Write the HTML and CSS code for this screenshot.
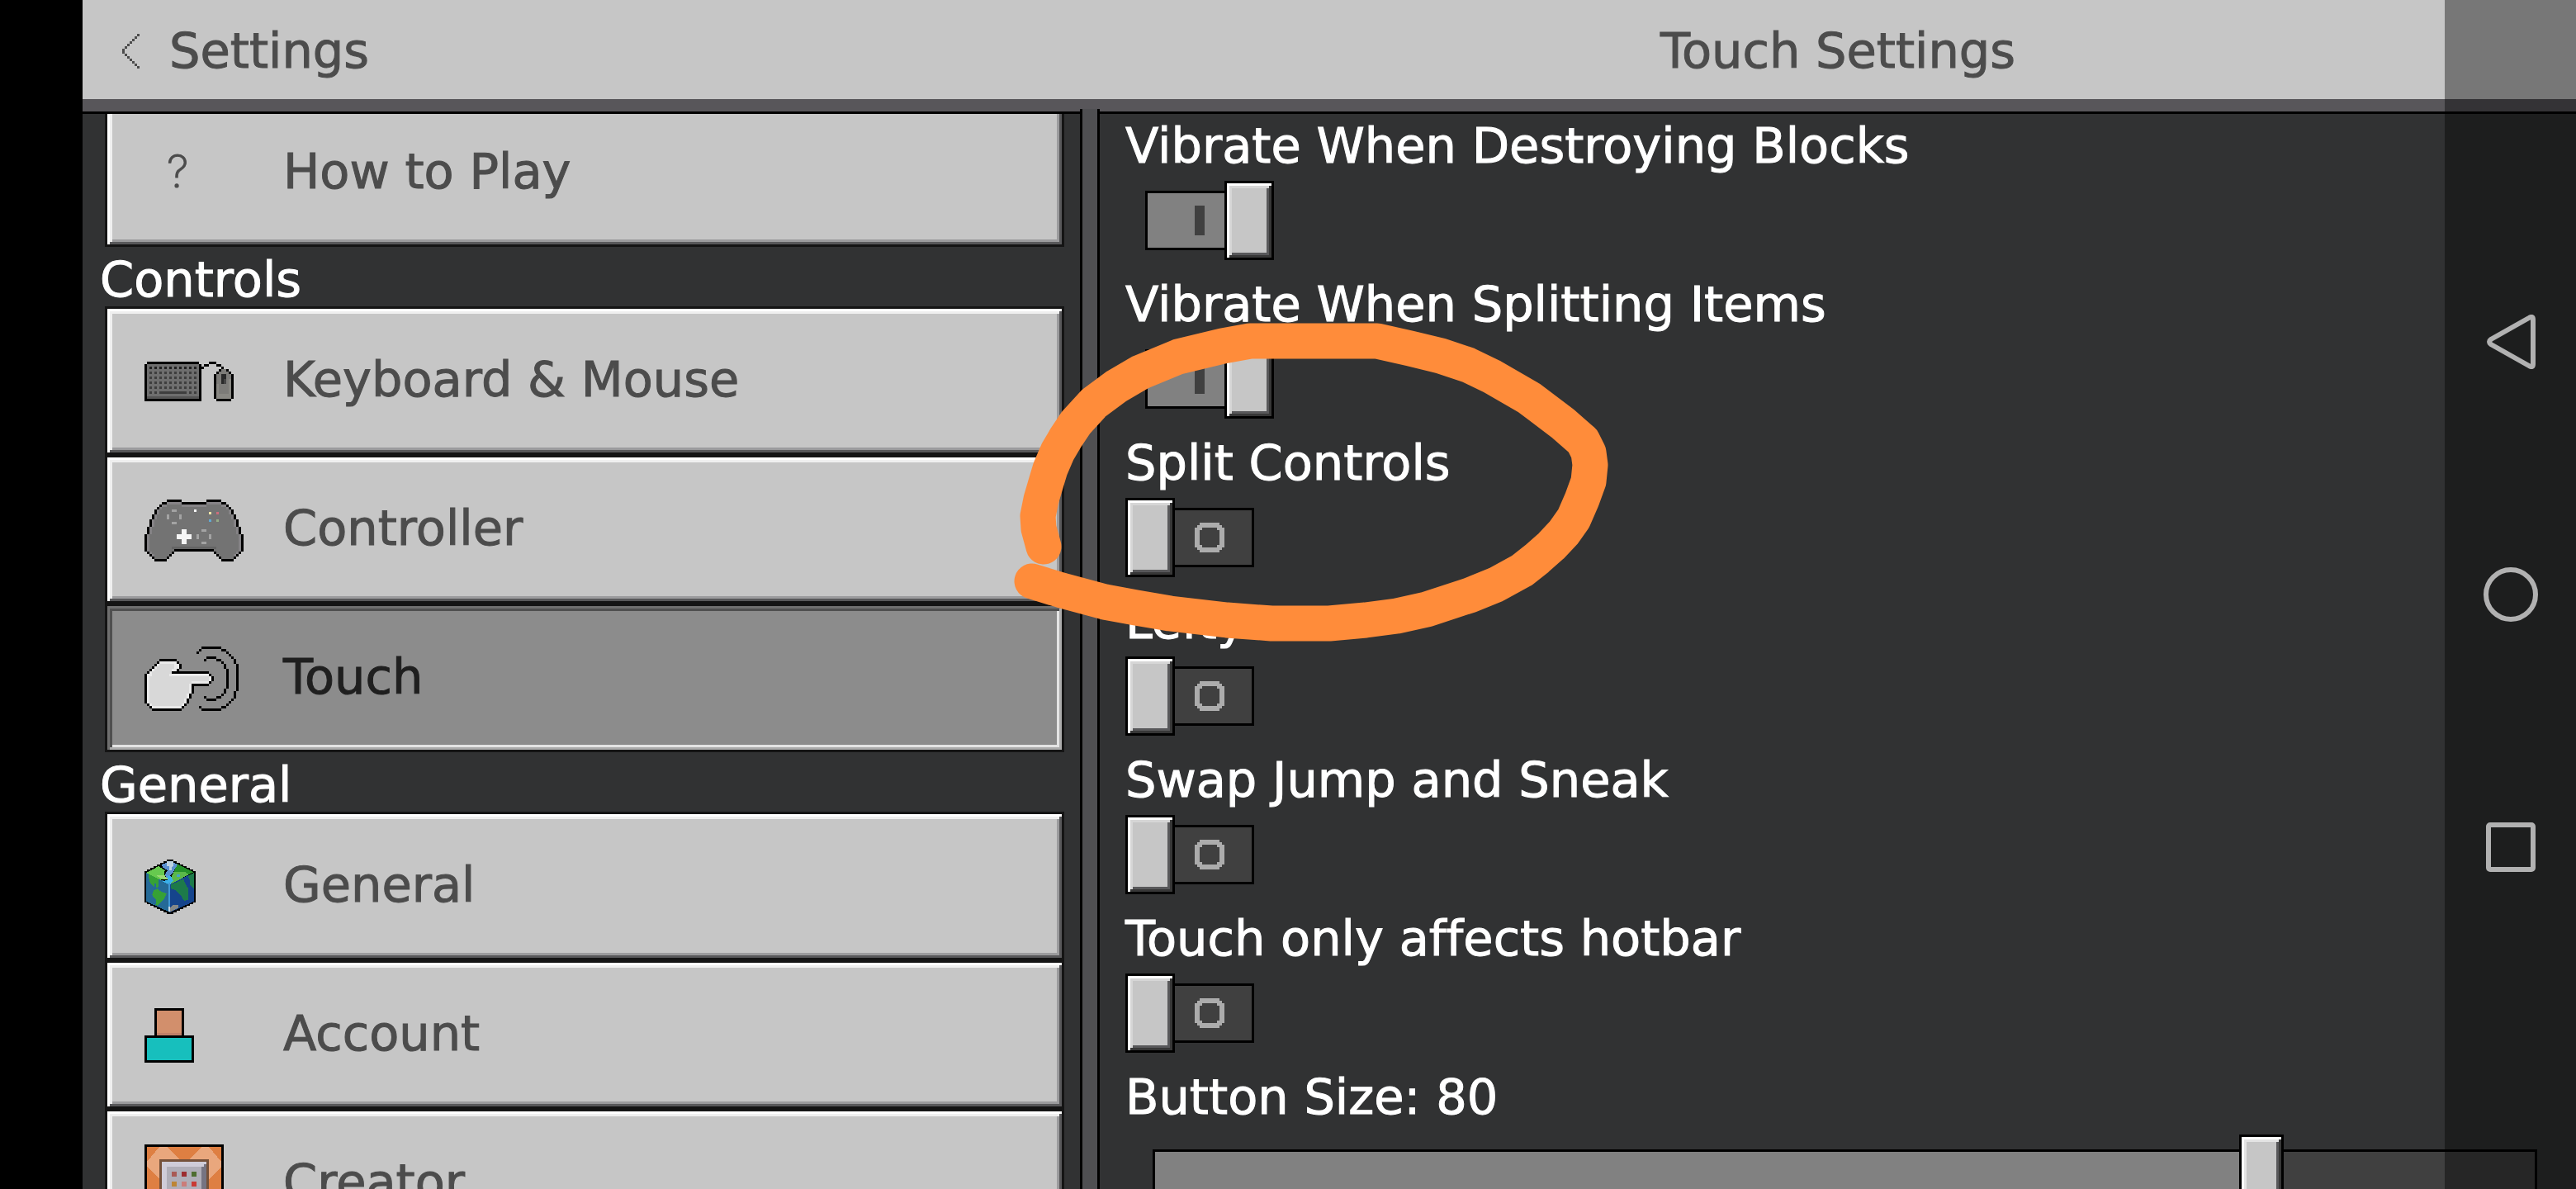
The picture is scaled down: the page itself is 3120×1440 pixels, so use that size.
FILE: index.html
```html
<!DOCTYPE html>
<html lang="en">
<head>
<meta charset="utf-8">
<title>Touch Settings</title>
<link rel="stylesheet" href="styles.css">
</head>
<body>
<div class="game">
  <header class="topbar">
    <button class="back" type="button">
      <svg class="chevron" viewBox="0 0 7 14" aria-hidden="true"><path d="M6 0h1v1h-1zM5 1h1v1h-1zM4 2h1v1h-1zM3 3h1v1h-1zM2 4h1v1h-1zM1 5h1v1h-1zM0 6h1v2h-1zM1 8h1v1h-1zM2 9h1v1h-1zM3 10h1v1h-1zM4 11h1v1h-1zM5 12h1v1h-1zM6 13h1v1h-1z"/></svg>
      <span>Settings</span>
    </button>
    <h1 class="title">Touch Settings</h1>
  </header>

  <div class="columns">
    <nav class="sidebar" aria-label="Settings sections">
      <div class="sections">
        <button class="item" type="button">
          <span class="icon icon-help" aria-hidden="true">?</span>
          <span>How to Play</span>
        </button>

        <h2 class="group">Controls</h2>
        <button class="item" type="button">
          <span class="icon"><svg width="108" height="48" viewBox="0 0 36 16" aria-hidden="true">
            <path fill="#000" d="M1 0H22V1H23V16H0V1H1zM23 2h1v1h-1zM24 1h2v1h-2zM26 0h3v1h-3zM29 1h2v1h-2zM31 2h1v1h-1zM30 3h4v1h-4zM29 4h6v1h-6zM28 5h8v10h-8zM29 15h6v1h-6z"/>
            <path fill="#6e6e6e" d="M1 1H22V14H1z"/>
            <path fill="#555" d="M1 14H22V15H1z"/>
            <path fill="#202020" d="M2 2h1v1h-1zM4 2h1v1h-1zM6 2h1v1h-1zM8 2h1v1h-1zM10 2h1v1h-1zM12 2h1v1h-1zM14 2h1v1h-1zM16 2h1v1h-1zM18 2h1v1h-1zM20 2h1v1h-1z"/>
            <path fill="#3e3e3e" d="M2 4h1v1h-1zM4 4h1v1h-1zM6 4h1v1h-1zM8 4h1v1h-1zM10 4h1v1h-1zM12 4h1v1h-1zM14 4h1v1h-1zM16 4h1v1h-1zM18 4h1v1h-1zM20 4h1v1h-1zM2 6h1v1h-1zM4 6h1v1h-1zM6 6h1v1h-1zM8 6h1v1h-1zM10 6h1v1h-1zM12 6h1v1h-1zM14 6h1v1h-1zM16 6h1v1h-1zM18 6h1v1h-1zM20 6h1v1h-1zM2 8h1v1h-1zM4 8h1v1h-1zM6 8h1v1h-1zM8 8h1v1h-1zM10 8h1v1h-1zM12 8h1v1h-1zM14 8h1v1h-1zM16 8h1v1h-1zM18 8h1v1h-1zM20 8h1v1h-1zM2 10h1v1h-1zM4 10h1v1h-1zM6 10h1v1h-1zM8 10h1v1h-1zM10 10h1v1h-1zM12 10h1v1h-1zM14 10h1v1h-1zM16 10h1v1h-1zM18 10h1v1h-1zM20 10h1v1h-1zM2 12h1v1h-1zM4 12h1v1h-1zM6 12h11v1h-11zM18 12h1v1h-1zM20 12h1v1h-1z"/>
            <path fill="#7c7b78" d="M31 3h2v1h1v1h1v10h-6v-10h1v-1h1z"/>
            <path fill="#898883" d="M29 9h1v6h-1zM34 7h1v8h-1zM30 13h4v2h-4z"/>
            <path fill="#292929" d="M31 5h2v4h-2z"/>
            <path fill="#444" d="M32 7h1v2h-1z"/>
          </svg></span>
          <span>Keyboard &amp; Mouse</span>
        </button>
        <button class="item" type="button">
          <span class="icon"><svg width="120" height="75" viewBox="0 0 40 25" aria-hidden="true">
            <path fill="#000" d="M9 0H15V1H25V0H31V1H33V2H34V3H35V4H36V6H37V8H38V11H39V14H40V21H39V22H38V23H37V24H36V25H31V24H30V23H29V22H28V21H12V22H11V23H10V24H9V25H4V24H3V23H2V22H1V21H0V14H1V11H2V8H3V6H4V4H5V3H6V2H7V1H9Z"/>
            <path fill="#858386" d="M9 1H15V2H25V1H31V2H33V3H34V4H35V6H36V8H37V11H38V14H39V21H38V22H37V23H36V24H31V23H30V22H29V21H28V20H12V21H11V22H10V23H9V24H4V23H3V22H2V21H1V14H2V11H3V8H4V6H5V4H6V3H7V2H9Z"/>
            <path fill="#737373" d="M9 2H15V3H25V2H31V3H33V4H34V6H35V8H36V11H37V14H38V21H37V22H36V24H31V23H30V22H29V21H28V20H12V21H11V22H10V23H9V24H4V22H3V21H2V14H3V11H4V8H5V6H6V4H7V3H9Z"/>
            <path fill="#646464" d="M11 19H29V20H11z"/>
            <path fill="#a3a3a3" d="M11 4h2v1h-2zM9 6h1v2h-1zM14 6h1v2h-1zM11 9h2v1h-2zM23 12h2v1h-2zM21 14h1v2h-1zM26 14h1v2h-1zM23 17h2v1h-2z"/>
            <path fill="#f5f5f5" d="M20 4h1v1h-1zM15 12h2v2h2v2h-2v2h-2v-2h-2v-2h2z"/>
            <path fill="#efe6a8" d="M26 5h1v1h-1z"/>
            <path fill="#cc6c7c" d="M29 5h1v1h-1z"/>
            <path fill="#62a9d2" d="M26 8h1v1h-1z"/>
            <path fill="#97ad88" d="M29 8h1v1h-1z"/>
          </svg></span>
          <span>Controller</span>
        </button>
        <button class="item item-selected" type="button" aria-current="page">
          <span class="icon"><svg width="114" height="78" viewBox="0 0 38 26" aria-hidden="true">
            <path fill="#000" d="M6 5H13V6H14V7H15V9H14V10H26V11H27V12H28V14H27V15H26V16H20V19H19V21H18V23H17V24H16V25H15V26H3V25H2V24H1V23H0V11H1V10H2V9H3V8H4V7H5V6H6Z"/>
            <path fill="#eaeaea" d="M6 6H13V7H14V9H13V10H11V11H26V12H27V14H26V15H19V19H18V21H17V23H16V24H15V25H3V24H2V23H1V11H2V10H3V9H4V8H5V7H6Z"/>
            <path fill="#d8d8d8" d="M6 7H12V9H11V11H10V12H26V14H19V15H18V19H17V21H16V23H15V24H3V23H2V12H3V10H4V9H5V8H6Z"/>
            <path fill="#000" d="M21 2h1v1h-1zM22 1h1v1h-1zM23 0h8v1h-8zM31 1h2v1h-2zM33 2h1v1h-1zM34 3h1v1h-1zM35 4h1v1h-1zM36 5h1v2h-1zM37 7h1v11h-1zM36 18h1v3h-1zM35 21h1v1h-1zM34 22h1v1h-1zM33 23h1v1h-1zM31 24h2v1h-2zM23 25h8v1h-8zM22 24h1v1h-1zM24 5h1v1h-1zM25 4h4v1h-4zM29 5h2v1h-2zM31 6h1v1h-1zM32 7h1v2h-1zM33 9h1v8h-1zM32 17h1v2h-1zM31 19h1v1h-1zM29 20h2v1h-2zM25 21h4v1h-4zM24 20h1v1h-1z"/>
          </svg></span>
          <span>Touch</span>
        </button>

        <h2 class="group">General</h2>
        <button class="item" type="button">
          <span class="icon"><svg width="62" height="66" viewBox="0 0 186 198" aria-hidden="true">
            <path fill="#000" d="M81 0H105V6H117V12H129V18H141V24H153V30H165V36H177V42H186V156H177V162H165V168H153V174H141V180H129V186H117V192H105V198H81V192H69V186H57V180H45V174H33V168H21V162H9V156H0V42H9V36H21V30H33V24H45V18H57V12H69V6H81Z"/>
            <path fill="#256a97" d="M6 48L93 88V192L6 152Z"/>
            <path fill="#15448c" d="M93 88L180 48V152L93 192Z"/>
            <path fill="#36a136" d="M14 52L50 68V98L42 104V86H36V100L26 92L18 78ZM34 112L46 106L60 116L80 124L72 142L62 152L48 168L40 164L44 146L34 138L28 128Z"/>
            <path fill="#1d7a4a" d="M96 92L142 70L150 92L158 104V146L144 150L132 130L110 110L98 108ZM158 60L180 48V106L166 92V76Z"/>
            <path fill="#67c94f" d="M6 48L52 24L74 40L70 60L86 70L58 74Z"/>
            <path fill="#25912a" d="M116 14L178 46L156 56L134 46L108 44Z"/>
            <path fill="#5bb84a" d="M106 46L148 46L162 54L98 88L92 74Z"/>
            <path fill="#9bd873" d="M42 56H76V64H92V72L60 70Z"/>
            <path fill="#5a90d0" d="M62 18L93 6L120 18L104 46L92 60L80 66L74 54L84 40L66 28Z"/>
            <path fill="#bdd3e2" d="M82 6H104V24L98 28V38H90V24H82Z"/>
            <path fill="#3ab0ea" d="M84 58L98 62L104 76L92 92L66 80L84 74Z"/>
            <path fill="#45a4c4" d="M116 54H130V64H116Z"/>
            <path fill="#3f96d4" d="M86 84H93V190H86Z"/>
            <path fill="#858888" d="M93 176L104 164H122V176L93 190Z"/>
            <path fill="#c6d6e2" d="M87 172H93V190H87Z"/>
          </svg></span>
          <span>General</span>
        </button>
        <button class="item" type="button">
          <span class="icon"><svg width="60" height="66" viewBox="0 0 20 22" aria-hidden="true">
            <path fill="#000" d="M4 0H16V11H20V22H0V11H4z"/>
            <path fill="#d28f6c" d="M5 1H15V11H5z"/>
            <path fill="#c08068" d="M5 10H15V11H5z"/>
            <path fill="#000" d="M4 11H16V12H4z"/>
            <path fill="#17bfbd" d="M1 12H19V21H1z"/>
          </svg></span>
          <span>Account</span>
        </button>
        <button class="item" type="button">
          <span class="icon"><svg width="96" height="96" viewBox="0 0 32 32" aria-hidden="true">
            <path fill="#000" d="M0 0H32V32H0z"/>
            <path fill="#de7f42" d="M1 1H31V31H1z"/>
            <path fill="#e9a77d" d="M6 1H9L14 6L6 14L1 9V7ZM23 1H26L31 7V9L26 14L18 6Z"/>
            <path fill="#75513a" d="M6 6H26V26H6z"/>
            <path fill="#cfccd8" d="M7 7H25V25H7z"/>
            <path fill="#767482" d="M25 8V25H7V24H23V9H24V8z"/>
            <path fill="#b0aeb8" d="M9 9H23V23H9z"/>
            <path fill="#a95a55" d="M11 11h2v2h-2z"/><path fill="#9c2c30" d="M15 11h2v2h-2z"/><path fill="#4e6e31" d="M19 11h2v2h-2z"/>
            <path fill="#bd8535" d="M11 15h2v2h-2z"/><path fill="#cb7c7a" d="M15 15h2v2h-2z"/><path fill="#c93a34" d="M19 15h2v2h-2z"/>
          </svg></span>
          <span>Creator</span>
        </button>
      </div>
    </nav>

    <div class="divider"></div>

    <main class="options">
      <div class="option"><label for="vibrate-destroy">Vibrate When Destroying Blocks</label><input class="toggle" type="checkbox" id="vibrate-destroy" checked></div>
      <div class="option"><label for="vibrate-split">Vibrate When Splitting Items</label><input class="toggle" type="checkbox" id="vibrate-split" checked></div>
      <div class="option"><label for="split-controls">Split Controls</label><input class="toggle" type="checkbox" id="split-controls"></div>
      <div class="option"><label for="lefty">Lefty</label><input class="toggle" type="checkbox" id="lefty"></div>
      <div class="option"><label for="swap">Swap Jump and Sneak</label><input class="toggle" type="checkbox" id="swap"></div>
      <div class="option"><label for="hotbar">Touch only affects hotbar</label><input class="toggle" type="checkbox" id="hotbar"></div>
      <div class="option"><label for="size">Button Size: 80</label><input class="slider" type="range" id="size" min="50" max="87" value="80"></div>
    </main>
  </div>
</div>

<svg class="marker" width="740" height="410" viewBox="1220 380 740 410" aria-hidden="true">
  <path d="M1264 662L1258 640L1257 625L1261 605L1266 588L1272 568L1281 547L1291 530L1303 512L1325 488L1352 468L1381 451L1427 432L1481 419L1514 413H1668L1708 422L1745 431L1778 442L1807 456L1852 482L1893 513L1917 534L1924 548L1926 563L1924 583L1916 605L1906 628L1894 645L1879 661L1862 676L1843 691L1812 708L1780 721L1728 738L1692 746L1654 751L1610 755H1540L1486 751L1417 743L1376 736L1338 729L1286 715L1250 704"/>
</svg>

<div class="system-nav">
  <button type="button" aria-label="Back"><svg width="66" height="66" viewBox="0 0 66 66"><path d="M55 4Q60 1 60 6V60Q60 65 55 62L9 36Q5 33 9 30Z"/></svg></button>
  <button type="button" aria-label="Home"><svg width="66" height="66" viewBox="0 0 66 66"><circle cx="33" cy="33" r="30"/></svg></button>
  <button type="button" aria-label="Recent apps"><svg width="66" height="66" viewBox="0 0 66 66"><rect x="6" y="6" width="54" height="54" rx="2"/></svg></button>
</div>
</body>
</html>
```
FILE: styles.css
```css
*,
*::before,
*::after {
  box-sizing: border-box;
}

body {
  margin: 0;
  background: #000;
  color: #fff;
  font: 59px/72px "DejaVu Sans", sans-serif;
  font-variant-ligatures: none;
  -webkit-text-stroke: 1px;
  overflow: hidden;
}

button {
  margin: 0;
  border: 0;
  background: none;
  font: inherit;
  font-variant-ligatures: none;
  color: inherit;
}

h1,
h2 {
  margin: 0;
  font: inherit;
}

svg {
  display: block;
}

.game {
  display: flex;
  flex-direction: column;
  height: 100vh;
  margin-left: 100px;
  background: #313233;
}

/* Top bar */

.topbar {
  display: grid;
  grid-template-columns: 40% 1fr;
  flex: none;
  align-items: center;
  height: 138px;
  padding-bottom: 12px;
  background: #c6c6c6;
  border-bottom: 3px solid #000;
  box-shadow: inset 0 -15px 0 #58565a;
  color: #4c4c4c;
}

.back {
  display: flex;
  align-items: center;
  justify-self: start;
  gap: 36px;
  padding: 0 48px;
}

.chevron {
  width: 21px;
  height: 42px;
  fill: #4c4c4c;
  shape-rendering: crispEdges;
}

.title {
  padding-left: 24px;
  text-align: center;
}

/* Body columns */

.columns {
  display: grid;
  grid-template-columns: 40% 24px 1fr;
  flex: 1;
  min-height: 0;
}

.divider {
  position: relative;
  margin-top: -6px;
  background: #4f4f52;
  border: solid #000;
  border-width: 0 3px;
}

/* Sidebar */

.sidebar {
  overflow: hidden;
  padding: 0 19px 0 27px;
}

.sections {
  display: flex;
  flex-direction: column;
  margin-top: -19px;
}

.group {
  height: 72px;
  margin-left: -6px;
  padding-top: 4px;
}

.item {
  display: flex;
  flex: none;
  align-items: center;
  height: 180px;
  padding: 0 45px 2px;
  background: #c6c6c6;
  border: 3px solid #141414;
  box-shadow: inset 3px 3px 0 #fff, inset -3px -3px 0 #58585a,
    inset 6px 6px 0 #efefef, inset -6px -6px 0 #9b9b9d;
  color: #4c4c4c;
  text-align: left;
}

.item-selected {
  background: #8c8c8c;
  box-shadow: inset 3px 3px 0 #6f6f6f, inset -3px -3px 0 #acacac,
    inset 6px 6px 0 #4f4f4f, inset -6px -6px 0 #e4e4e4;
  color: #1f1f1f;
}

.icon {
  flex: none;
  width: 168px;
  padding-top: 4px;
  shape-rendering: crispEdges;
}

.icon-help {
  padding: 0 0 0 27px;
  font: 200 54px/72px Inter, sans-serif;
}

/* Options */

.options {
  overflow: hidden;
  padding: 0 47px 0 31px;
}

.option {
  display: flex;
  flex-direction: column;
  align-items: flex-start;
  height: 192px;
}

.option label {
  height: 72px;
  padding-top: 3px;
}

.toggle {
  display: flex;
  flex-direction: row-reverse;
  justify-content: flex-end;
  align-items: center;
  appearance: none;
  width: 180px;
  height: 96px;
  margin: 9px 0 0;
}

.toggle::before {
  content: "";
  width: 96px;
  height: 72px;
  border: 3px solid #000;
  border-left: 0;
  background:
    linear-gradient(#acacac 0 0) 30px 15px / 24px 6px,
    linear-gradient(#acacac 0 0) 30px 45px / 24px 6px,
    linear-gradient(#acacac 0 0) 24px 21px / 6px 24px,
    linear-gradient(#acacac 0 0) 54px 21px / 6px 24px,
    linear-gradient(#acacac 0 0) 27px 18px / 6px 6px,
    linear-gradient(#acacac 0 0) 51px 18px / 6px 6px,
    linear-gradient(#acacac 0 0) 27px 42px / 6px 6px,
    linear-gradient(#acacac 0 0) 51px 42px / 6px 6px,
    #404040;
  background-repeat: no-repeat;
}

.toggle::after {
  content: "";
  width: 60px;
  height: 96px;
  background: #c6c6c6;
  border: 3px solid #000;
  box-shadow: inset 3px 3px 0 #fff, inset -3px -3px 0 #373737,
    inset 6px 6px 0 #d6d6d6, inset -6px -6px 0 #58585a;
}

.toggle:checked {
  flex-direction: row;
  padding-left: 24px;
  justify-content: flex-start;
}

.toggle:checked::before {
  border-left: 3px solid #000;
  border-right: 0;
  background: linear-gradient(#404040 0 0) 57px 15px / 12px 36px no-repeat #818181;
}

.slider {
  appearance: none;
  align-self: stretch;
  height: 108px;
  margin: 12px 0 0 33px;
  background: none;
}

.slider::-webkit-slider-runnable-track {
  height: 72px;
  border: solid #000;
  border-width: 3px 0;
  background: linear-gradient(90deg, #000 3px, #818181 3px 80%, #404040 80% calc(100% - 3px), #000 calc(100% - 3px));
}

.slider::-webkit-slider-thumb {
  appearance: none;
  width: 54px;
  height: 108px;
  margin-top: -21px;
  background: #c6c6c6;
  border: 3px solid #000;
  box-shadow: inset 3px 3px 0 #fff, inset -3px -3px 0 #373737,
    inset 6px 6px 0 #e4e4e4, inset -6px -6px 0 #58585a;
}

/* Hand-drawn highlight laid over the page */

.marker {
  position: absolute;
  left: 1220px;
  top: 380px;
  pointer-events: none;
}

.marker path {
  fill: none;
  stroke: #ff8c3a;
  stroke-width: 43px;
  stroke-linecap: round;
  stroke-linejoin: round;
}

/* Android navigation bar */

.system-nav {
  position: fixed;
  inset: 0 0 0 auto;
  display: flex;
  flex-direction: column;
  justify-content: center;
  width: 159px;
  background: rgba(0, 0, 0, 0.4);
}

.system-nav button {
  display: flex;
  align-items: center;
  justify-content: center;
  height: 306px;
}

.system-nav svg {
  fill: none;
  stroke: #b1b1b1;
  stroke-width: 6px;
}
```
